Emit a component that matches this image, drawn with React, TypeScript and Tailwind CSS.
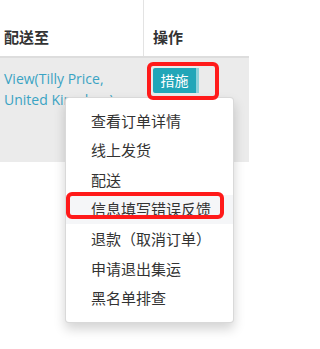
const menuItems = [
  "查看订单详情",
  "线上发货",
  "配送",
  "信息填写错误反馈",
  "退款（取消订单）",
  "申请退出集运",
  "黑名单排查",
];

const font = { fontFamily: '"Open Sans", "Noto Sans CJK SC", sans-serif' };

const App = () => {
  return (
    <div className="relative w-[249px] h-[349px] bg-white overflow-hidden text-[#333]" style={font}>
      {/* Header */}
      <div className="grid grid-cols-[144px_1fr] h-[58px] border-b-2 border-[#dddddd]">
        <div className="flex items-end pb-[8px] pl-[4px] border-r border-[#e3e3e3] text-[15px] font-bold">
          配送至
        </div>
        <div className="flex items-end pb-[8px] pl-[9px] text-[15px] font-bold">操作</div>
      </div>

      {/* Row */}
      <div className="grid grid-cols-[144px_1fr] h-[104px] bg-[#ebebeb]">
        <div className="pt-[10px] pl-[4px] pr-[2px] text-[14px] leading-[21px] text-[#3aa3c3]">
          View(Tilly Price, United Kingdom)
        </div>
        <div className="pt-[10px] pl-[9px]">
          <div className="flex h-[25px]">
            <button className="w-[46px] h-[25px] bg-[#22a6b8] border-r-[3px] border-[#8fd2db] text-white text-[14px] leading-[25px] rounded-l-[2px]">
              措施
            </button>
          </div>
        </div>
      </div>

      {/* Dropdown */}
      <div className="absolute left-[65px] top-[97px] w-[169px] h-[226px] bg-white border border-[rgba(0,0,0,0.15)] rounded-[4px] shadow-[0_6px_12px_rgba(0,0,0,0.175)] pt-[8px]">
        {menuItems.map((item, i) => (
          <div
            key={item}
            className={`h-[29.6px] flex items-center pl-[25px] text-[15px] text-[#333] ${i === 3 ? "bg-[#f5f6f8]" : ""}`}
          >
            {item}
          </div>
        ))}
      </div>

      {/* Annotation boxes */}
      <div className="absolute left-[147px] top-[62px] w-[72px] h-[38px] border-[4px] border-[#ff1a1a] rounded-[6px]" />
      <div className="absolute left-[66px] top-[192px] w-[158px] h-[27px] border-[4px] border-[#ff1a1a] rounded-[6px]" />
    </div>
  );
};

export default App;
